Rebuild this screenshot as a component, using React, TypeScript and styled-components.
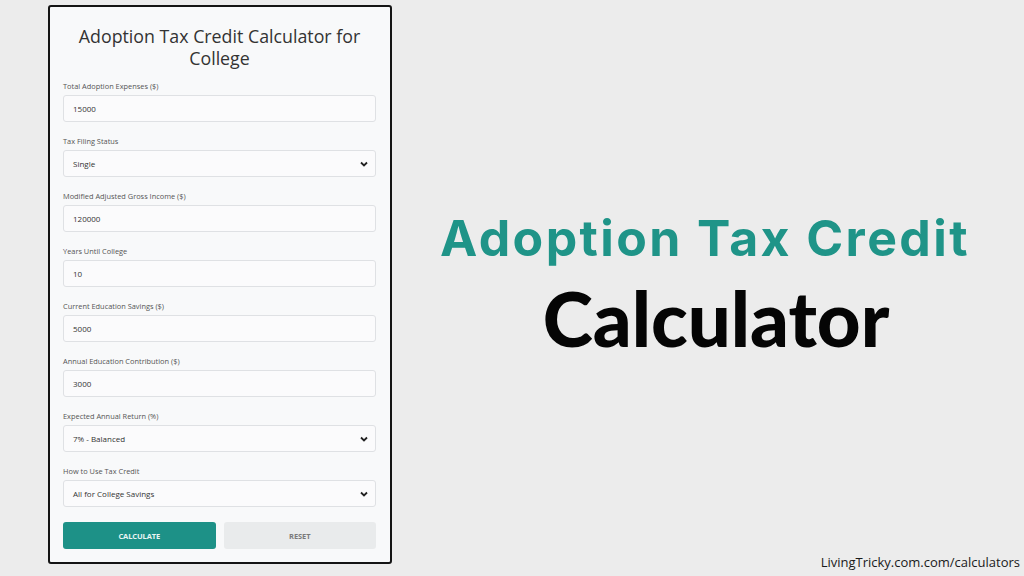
import styled, { createGlobalStyle } from "styled-components";

const GlobalStyle = createGlobalStyle`
  html, body {
    margin: 0;
    padding: 0;
    background: #ececec;
  }
  * {
    box-sizing: border-box;
  }
`;

const Page = styled.div`
  position: relative;
  width: 1024px;
  height: 576px;
  display: flex;
  flex-direction: row;
  align-items: flex-start;
  overflow: hidden;
`;

const Panel = styled.div`
  margin: 5px 0 0 48px;
  width: 344px;
  height: 559px;
  border: 2px solid #141414;
  border-radius: 3px;
  background: #f8f9fa;
  padding: 18px 14px 0 13px;
  display: flex;
  flex-direction: column;
  font-family: "Open Sans", "Noto Sans", sans-serif;
`;

const FormTitle = styled.h1`
  margin: 0 0 12px 0;
  font-family: "Open Sans", "Noto Sans", sans-serif;
  font-weight: 500;
  font-size: 17.8px;
  line-height: 22px;
  color: #333;
  text-align: center;
`;

const Field = styled.div`
  display: flex;
  flex-direction: column;
  margin-bottom: 14px;
`;

const Label = styled.label`
  font-size: 7.4px;
  line-height: 10px;
  color: #555;
  margin-bottom: 4px;
`;

const Control = styled.div`
  position: relative;
  height: 27px;
  border: 1px solid #dfe1e4;
  border-radius: 3px;
  background: #fbfbfc;
  display: flex;
  align-items: center;
  padding: 0 9px;
  font-size: 8px;
  color: #333;
`;

const Chevron = styled.svg`
  position: absolute;
  right: 6px;
  top: 50%;
  transform: translateY(-50%);
  width: 10px;
  height: 10px;
`;

const Buttons = styled.div`
  display: grid;
  grid-template-columns: 1fr 1fr;
  gap: 8px;
  margin-top: 1px;
`;

const Button = styled.div<{ primary?: boolean }>`
  height: 27px;
  border-radius: 3px;
  display: flex;
  align-items: center;
  justify-content: center;
  font-size: 7.5px;
  font-weight: 700;
  letter-spacing: -0.1px;
  background: ${(p) => (p.primary ? "#1d9187" : "#e9ebec")};
  color: ${(p) => (p.primary ? "#e9f5f3" : "#7a7a7a")};
`;

const Hero = styled.div`
  flex: 1;
  padding-top: 207px;
  display: flex;
  flex-direction: column;
  align-items: center;
  margin-left: -6px;
`;

const HeroTop = styled.div`
  font-family: "Inter", "Noto Sans", sans-serif;
  font-weight: 700;
  font-size: 50px;
  line-height: 62px;
  letter-spacing: 2.4px;
  color: #1f9488;
`;

const HeroBottom = styled.div`
  font-family: "Lato", "Noto Sans", sans-serif;
  font-weight: 900;
  font-size: 76px;
  line-height: 84px;
  color: #050505;
  margin: 7px 0 0 22px;
`;

const Footer = styled.div`
  position: absolute;
  right: 4px;
  bottom: 5px;
  font-family: "Open Sans", "Noto Sans", sans-serif;
  font-size: 13px;
  color: #1a1a1a;
`;

const fields: { label: string; value: string; select?: boolean }[] = [
  { label: "Total Adoption Expenses ($)", value: "15000" },
  { label: "Tax Filing Status", value: "Single", select: true },
  { label: "Modified Adjusted Gross Income ($)", value: "120000" },
  { label: "Years Until College", value: "10" },
  { label: "Current Education Savings ($)", value: "5000" },
  { label: "Annual Education Contribution ($)", value: "3000" },
  { label: "Expected Annual Return (%)", value: "7% - Balanced", select: true },
  { label: "How to Use Tax Credit", value: "All for College Savings", select: true },
];

export default function App() {
  return (
    <Page>
      <GlobalStyle />
      <Panel>
        <FormTitle>Adoption Tax Credit Calculator for College</FormTitle>
        {fields.map((f) => (
          <Field key={f.label}>
            <Label>{f.label}</Label>
            <Control>
              {f.value}
              {f.select && (
                <Chevron viewBox="0 0 10 10">
                  <path d="M2 3.5 L5 6.5 L8 3.5" fill="none" stroke="#222" strokeWidth="1.8" />
                </Chevron>
              )}
            </Control>
          </Field>
        ))}
        <Buttons>
          <Button primary>CALCULATE</Button>
          <Button>RESET</Button>
        </Buttons>
      </Panel>
      <Hero>
        <HeroTop>Adoption Tax Credit</HeroTop>
        <HeroBottom>Calculator</HeroBottom>
      </Hero>
      <Footer>LivingTricky.com.com/calculators</Footer>
    </Page>
  );
}
